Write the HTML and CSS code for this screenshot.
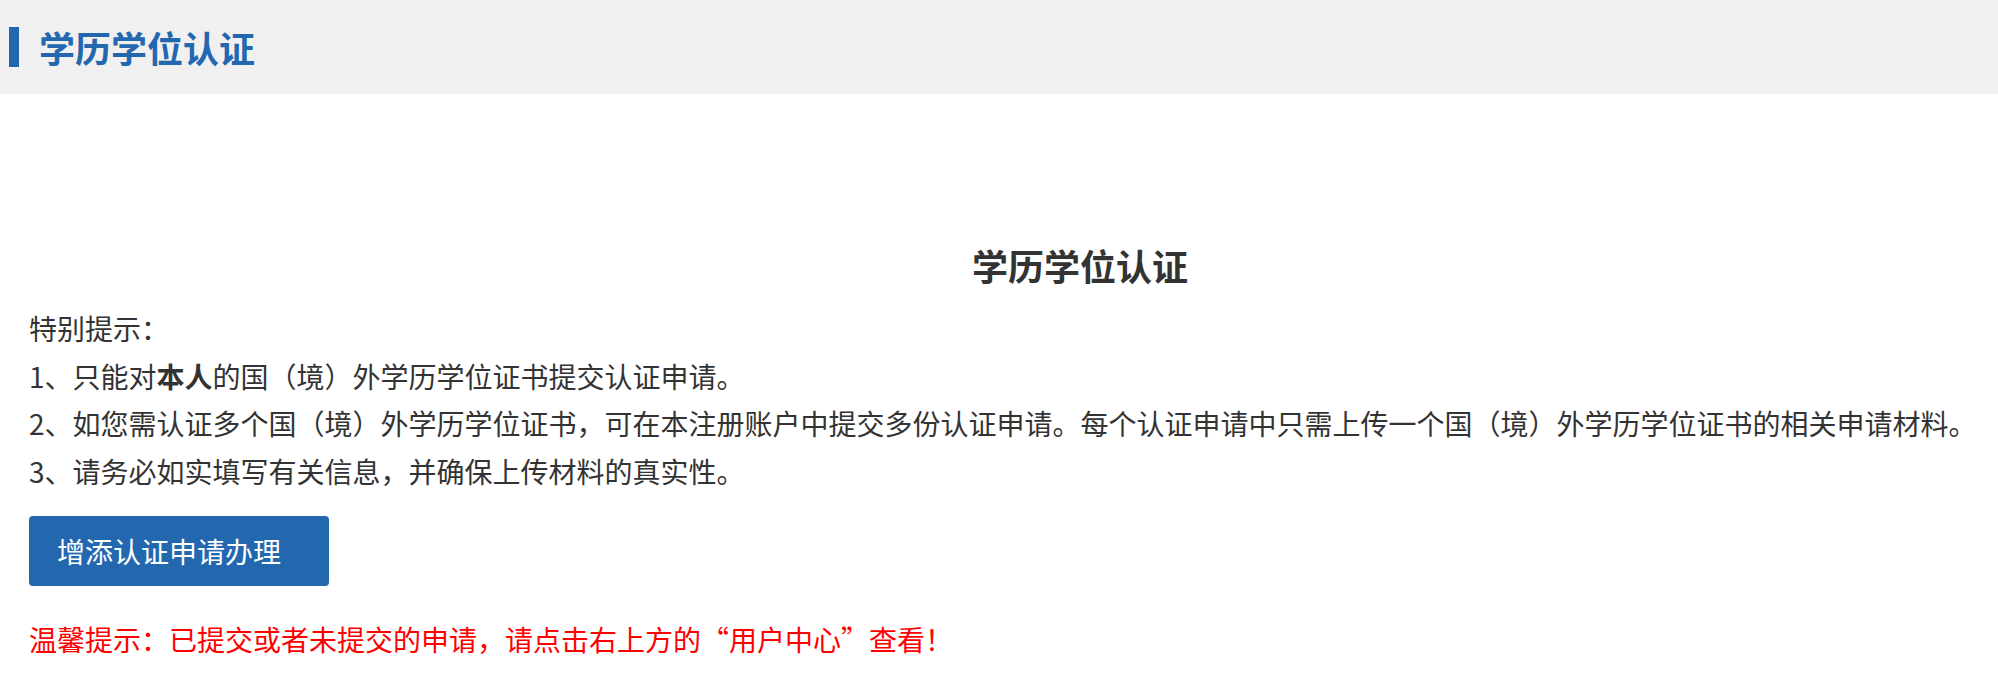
FILE: index.html
```html
<!doctype html>
<html lang="zh-CN">
<head>
    <meta charset="UTF-8">
    <title>学历学位认证</title>
    <link rel="stylesheet" href="styles.css">
</head>
<body>
    <header class="page-header">
        <h1 class="page-title">学历学位认证</h1>
    </header>

    <main class="content">
        <h2 class="section-title">学历学位认证</h2>

        <div class="notice">
            <p>特别提示：</p>
            <p>1、只能对<strong>本人</strong>的国（境）外学历学位证书提交认证申请。</p>
            <p>2、如您需认证多个国（境）外学历学位证书，可在本注册账户中提交多份认证申请。每个认证申请中只需上传一个国（境）外学历学位证书的相关申请材料。</p>
            <p>3、请务必如实填写有关信息，并确保上传材料的真实性。</p>
        </div>

        <button type="button" class="btn-add">增添认证申请办理</button>

        <p class="tip">温馨提示：已提交或者未提交的申请，请点击右上方的“用户中心”查看！</p>
    </main>
</body>
</html>
```

FILE: styles.css
```css
body {
    font-family: "Noto Sans CJK SC", "Noto Sans", sans-serif;
    margin: 0;
    padding: 0;
    color: #333;
    background-color: #fff;
}

.page-header {
    display: flex;
    align-items: center;
    height: 94px;
    padding-left: 9px;
    background-color: #f0f0f0;
}

.page-title {
    margin: 0;
    padding-left: 20px;
    border-left: 10px solid #2368af;
    font-size: 36px;
    line-height: 40px;
    font-weight: bold;
    color: #2368af;
}

.content {
    padding: 0 0 0 29px;
}

.section-title {
    margin: 146px 0 15px;
    padding-left: 133px;
    text-align: center;
    font-size: 36px;
    line-height: 50px;
    font-weight: bold;
}

.notice p {
    margin: 0;
    font-size: 28px;
    line-height: 47.5px;
}

.notice strong {
    font-weight: bold;
}

.btn-add {
    display: block;
    width: 300px;
    height: 70px;
    margin-top: 21px;
    padding: 0 0 0 28px;
    border: none;
    border-radius: 4px;
    background-color: #2368af;
    color: #fff;
    font-family: inherit;
    font-size: 28px;
    text-align: left;
    cursor: pointer;
}

.tip {
    margin: 30px 0 0;
    font-size: 28px;
    line-height: 47.5px;
    color: #ff0000;
}
```
